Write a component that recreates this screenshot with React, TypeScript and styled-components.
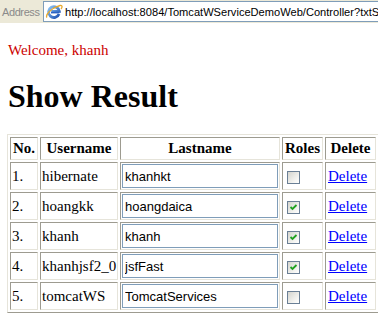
import styled, { createGlobalStyle } from "styled-components";

const GlobalStyle = createGlobalStyle`
  html, body {
    margin: 0;
    padding: 0;
    background: #ffffff;
  }
  body {
    font-family: "Liberation Serif", "Times New Roman", serif;
    font-size: 15px;
    color: #000000;
    overflow: hidden;
  }
`;

const AddressBar = styled.div`
  display: flex;
  align-items: center;
  height: 23px;
  background: #ece9d8;
  overflow: hidden;
`;

const AddressLabel = styled.span`
  width: 43px;
  padding-left: 2px;
  box-sizing: border-box;
  font-family: "Liberation Sans", Arial, sans-serif;
  font-size: 11px;
  letter-spacing: -0.4px;
  color: #8a8a8a;
  flex: none;
`;

const AddressField = styled.div`
  flex: 1;
  min-width: 0;
  display: flex;
  align-items: center;
  gap: 2px;
  height: 21px;
  box-sizing: border-box;
  border: 1px solid #7f9db9;
  border-right: none;
  background: #ffffff;
  padding-left: 1px;
  white-space: nowrap;
  overflow: hidden;
`;

const IconBox = styled.span`
  flex: none;
  display: block;
  width: 18px;
  height: 18px;
  svg {
    display: block;
  }
`;

const Url = styled.span`
  flex: none;
  font-family: "Liberation Sans", Arial, sans-serif;
  font-size: 11.1px;
  color: #000000;
`;

const Page = styled.div`
  padding: 19px 8px 0;
`;

const Welcome = styled.p`
  margin: 0 0 19px;
  color: #cc0000;
`;

const Title = styled.h1`
  margin: 0 0 19px;
  font-size: 32px;
  font-weight: bold;
`;

const Table = styled.table`
  margin-left: -1px;
  width: 372px;
  table-layout: fixed;
  border-collapse: separate;
  border-spacing: 2px;
  border: 1px solid;
  border-color: #e6e4da #9d9b90 #9d9b90 #e6e4da;
`;

const HeadCell = styled.th<{ $w: number }>`
  width: ${(p) => p.$w}px;
  height: 19px;
  padding: 1px;
  border: 1px solid;
  border-color: #9d9b90 #e6e4da #e6e4da #9d9b90;
  font-weight: bold;
  text-align: center;
  white-space: nowrap;
`;

const Cell = styled.td`
  height: 24px;
  padding: 1px;
  border: 1px solid;
  border-color: #9d9b90 #e6e4da #e6e4da #9d9b90;
  vertical-align: middle;
  white-space: nowrap;
  overflow: hidden;
`;

const NameInput = styled.input`
  display: block;
  width: 156px;
  height: 24px;
  box-sizing: border-box;
  margin: 0;
  padding: 0 2px;
  border: 1px solid #7f9db9;
  font-family: "Liberation Sans", Arial, sans-serif;
  font-size: 13px;
  color: #000000;
  background: #ffffff;
  outline: none;
`;

const CheckBox = styled.span`
  display: block;
  width: 13px;
  height: 13px;
  box-sizing: border-box;
  margin: 3px 0 0 3px;
  border: 1px solid #6a7f95;
  background: linear-gradient(135deg, #d4d4ce 0%, #f4f4f1 70%, #ffffff 100%);
  svg {
    display: block;
  }
`;

const DeleteLink = styled.a`
  color: #0000ff;
  text-decoration: underline;
  padding-left: 1px;
`;

function IeIcon() {
  return (
    <IconBox>
      <svg width="18" height="18" viewBox="0 0 18 18">
        <defs>
          <linearGradient id="ieBlue" x1="0" y1="0" x2="1" y2="1">
            <stop offset="0" stopColor="#8cc4f4" />
            <stop offset="1" stopColor="#1a4fb0" />
          </linearGradient>
        </defs>
        <path d="M14 11 A5.4 5.4 0 1 1 14.3 8.3 L6.3 8.3" fill="none" stroke="url(#ieBlue)" strokeWidth="2.8" />
        <path d="M6 9.6 L14.4 9.6" stroke="#2a63c4" strokeWidth="1.6" />
        <path d="M2 14.5 C0 12 6 5 15 2.5 C17.5 2 17.5 4 16 6" fill="none" stroke="#e6a92e" strokeWidth="1.3" />
      </svg>
    </IconBox>
  );
}

function Check({ checked }: { checked: boolean }) {
  return (
    <CheckBox>
      {checked && (
        <svg width="11" height="11" viewBox="0 0 11 11">
          <path d="M2.5 5 L4.5 7 L8.5 3" fill="none" stroke="#21a121" strokeWidth="1.8" />
        </svg>
      )}
    </CheckBox>
  );
}

interface UserRow {
  username: string;
  lastname: string;
  role: boolean;
}

const users: UserRow[] = [
  { username: "hibernate", lastname: "khanhkt", role: false },
  { username: "hoangkk", lastname: "hoangdaica", role: true },
  { username: "khanh", lastname: "khanh", role: true },
  { username: "khanhjsf2_0", lastname: "jsfFast", role: true },
  { username: "tomcatWS", lastname: "TomcatServices", role: false },
];

export default function App() {
  return (
    <>
      <GlobalStyle />
      <AddressBar>
        <AddressLabel>Address</AddressLabel>
        <AddressField>
          <IeIcon />
          <Url>http://localhost:8084/TomcatWServiceDemoWeb/Controller?txtS</Url>
        </AddressField>
      </AddressBar>
      <Page>
        <Welcome>Welcome, khanh</Welcome>
        <Title>Show Result</Title>
        <Table>
          <thead>
            <tr>
              <HeadCell $w={24}>No.</HeadCell>
              <HeadCell $w={74}>Username</HeadCell>
              <HeadCell $w={156}>Lastname</HeadCell>
              <HeadCell $w={37}>Roles</HeadCell>
              <HeadCell $w={47}>Delete</HeadCell>
            </tr>
          </thead>
          <tbody>
            {users.map((u, i) => (
              <tr key={u.username}>
                <Cell>{i + 1}.</Cell>
                <Cell>{u.username}</Cell>
                <Cell>
                  <NameInput type="text" defaultValue={u.lastname} />
                </Cell>
                <Cell>
                  <Check checked={u.role} />
                </Cell>
                <Cell>
                  <DeleteLink href="#">Delete</DeleteLink>
                </Cell>
              </tr>
            ))}
          </tbody>
        </Table>
      </Page>
    </>
  );
}
